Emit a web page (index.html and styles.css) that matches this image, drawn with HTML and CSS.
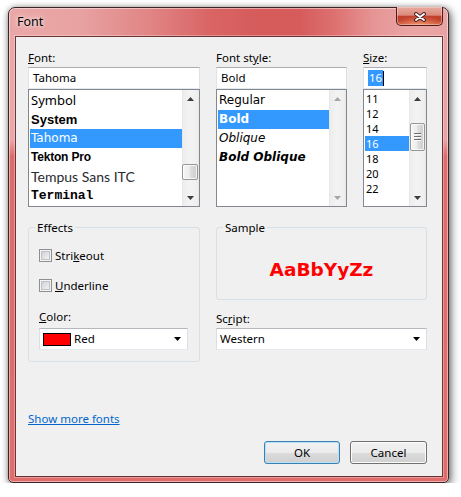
FILE: index.html
```html
<!DOCTYPE html>
<html>
<head>
<meta charset="utf-8">
<title>Font</title>
<link rel="stylesheet" href="styles.css">
</head>
<body>
<div class="window">
  <div class="titlebar">
    <span class="title">Font</span>
    <div class="close">
      <svg width="14" height="10" viewBox="0 0 14 10"><path d="M3 2 L11 8 M11 2 L3 8" stroke="#3b1c1c" stroke-width="3.8" stroke-linecap="round" fill="none"/><path d="M3 2 L11 8 M11 2 L3 8" stroke="#fff" stroke-width="2" stroke-linecap="round" fill="none"/></svg>
    </div>
  </div>
  <div class="client">
    <div class="pickers">
      <div class="picker">
        <div class="lbl"><u>F</u>ont:</div>
        <div class="input">Tahoma</div>
        <div class="list">
          <div class="items">
            <div class="item f-symbol">Symbol</div>
            <div class="item f-system">System</div>
            <div class="item f-tahoma selected">Tahoma</div>
            <div class="item f-tekton">Tekton Pro</div>
            <div class="item f-tempus">Tempus Sans ITC</div>
            <div class="item f-terminal">Terminal</div>
          </div>
          <div class="sbar">
            <div class="sbtn"><svg width="7" height="4" viewBox="0 0 7 4"><polygon points="0,4 3.5,0 7,4" fill="#3d3d3d"/></svg></div>
            <div class="track"><div class="thumb thumb-font"></div></div>
            <div class="sbtn"><svg width="7" height="4" viewBox="0 0 7 4"><polygon points="0,0 7,0 3.5,4" fill="#3d3d3d"/></svg></div>
          </div>
        </div>
      </div>
      <div class="picker">
        <div class="lbl">Font st<u>y</u>le:</div>
        <div class="input">Bold</div>
        <div class="list">
          <div class="items">
            <div class="item s-regular">Regular</div>
            <div class="item s-bold selected">Bold</div>
            <div class="item s-oblique">Oblique</div>
            <div class="item s-boldoblique">Bold Oblique</div>
          </div>
          <div class="sbar">
            <div class="sbtn"><svg width="7" height="4" viewBox="0 0 7 4"><polygon points="0,4 3.5,0 7,4" fill="#a6a6a6"/></svg></div>
            <div class="track"></div>
            <div class="sbtn"><svg width="7" height="4" viewBox="0 0 7 4"><polygon points="0,0 7,0 3.5,4" fill="#a6a6a6"/></svg></div>
          </div>
        </div>
      </div>
      <div class="picker">
        <div class="lbl"><u>S</u>ize:</div>
        <div class="input"><span class="sel-text">16</span><span class="caret"></span></div>
        <div class="list">
          <div class="items">
            <div class="item size">11</div>
            <div class="item size">12</div>
            <div class="item size">14</div>
            <div class="item size selected">16</div>
            <div class="item size">18</div>
            <div class="item size">20</div>
            <div class="item size">22</div>
          </div>
          <div class="sbar">
            <div class="sbtn"><svg width="7" height="4" viewBox="0 0 7 4"><polygon points="0,4 3.5,0 7,4" fill="#3d3d3d"/></svg></div>
            <div class="track"><div class="thumb thumb-size"><div class="grip"></div></div></div>
            <div class="sbtn"><svg width="7" height="4" viewBox="0 0 7 4"><polygon points="0,0 7,0 3.5,4" fill="#3d3d3d"/></svg></div>
          </div>
        </div>
      </div>
    </div>

    <div class="options">
      <fieldset class="group effects">
        <legend>Effects</legend>
        <div class="group-body">
          <div class="check-row first"><span class="check"></span><span>Stri<u>k</u>eout</span></div>
          <div class="check-row second"><span class="check"></span><span><u>U</u>nderline</span></div>
          <div class="lbl color-lbl"><u>C</u>olor:</div>
          <div class="combo color-combo">
            <span class="swatch"></span><span class="combo-text">Red</span>
            <svg class="arrow" width="7" height="4" viewBox="0 0 7 4"><polygon points="0,0 7,0 3.5,4" fill="#000"/></svg>
          </div>
        </div>
      </fieldset>
      <div class="right-col">
        <fieldset class="group sample">
          <legend>Sample</legend>
          <div class="sample-text">AaBbYyZz</div>
        </fieldset>
        <div class="lbl script-lbl">Sc<u>r</u>ipt:</div>
        <div class="combo script-combo">
          <span class="combo-text">Western</span>
          <svg class="arrow" width="7" height="4" viewBox="0 0 7 4"><polygon points="0,0 7,0 3.5,4" fill="#000"/></svg>
        </div>
      </div>
    </div>

    <a class="more" href="#">Show more fonts</a>

    <div class="buttons">
      <button class="btn default">OK</button>
      <button class="btn">Cancel</button>
    </div>
  </div>
</div>
</body>
</html>
```

FILE: styles.css
```css
html, body {
  margin: 0;
  padding: 0;
  background: #ffffff;
}

body {
  font-family: "Segoe UI", "Noto Sans", sans-serif;
  font-size: 11.5px;
  color: #000;
  padding: 7px 0 0 8px;
}

.window {
  box-sizing: border-box;
  width: 441px;
  height: 476px;
  border: 1px solid #3a2424;
  border-radius: 7px 7px 5px 5px;
  padding: 0 5px 5px 6px;
  display: flex;
  flex-direction: column;
  background:
    linear-gradient(to bottom, rgba(224,106,106,0) 0, rgba(224,106,106,0) 132px, #df6a6a 148px, #e06c6c 100%),
    linear-gradient(to right, #eaa7a7 0px, #e8a2a2 70px, #e18585 140px, #d96565 200px, #d65b5b 250px, #d65b5b 290px, #dd7070 325px, #e69595 365px, #eaa4a4 400px, #e9a3a3 441px);
  box-shadow: 2px 3px 10px rgba(0,0,0,0.55), 0 0 5px rgba(0,0,0,0.25), inset 0 0 0 1px rgba(255,255,255,0.45);
}

.titlebar {
  height: 28px;
  display: flex;
  justify-content: space-between;
  align-items: flex-start;
}

.title {
  margin: 6px 0 0 2px;
  font-size: 12.5px;
  line-height: 16px;
  color: #000;
  text-shadow: 0 0 6px rgba(255,255,255,0.9), 0 0 3px rgba(255,255,255,0.7);
}

.close {
  width: 47px;
  height: 19px;
  margin-top: -1px;
  box-sizing: border-box;
  border: 1px solid #4a1e1e;
  border-top: none;
  border-radius: 0 0 5px 5px;
  background:
    radial-gradient(ellipse 60% 50% at 50% 100%, rgba(255,170,120,0.7), rgba(255,170,120,0) 100%),
    linear-gradient(to bottom, #e9aba0 0%, #dc8a7c 45%, #c2412e 52%, #c0402c 75%, #cf5a40 100%);
  box-shadow: inset 0 0 0 1px rgba(255,220,210,0.45);
  display: flex;
  align-items: center;
  justify-content: center;
}

.close svg {
  display: block;
  margin-top: 1px;
}

.client {
  flex: 1;
  border: 1px solid #6a3434;
  background: #f0f0f0;
  padding: 13px 15px 12px 12px;
  display: flex;
  flex-direction: column;
  box-shadow: 0 0 0 1px rgba(255,255,255,0.3);
}

.lbl {
  line-height: 16px;
  height: 16px;
  margin-bottom: 1px;
  white-space: nowrap;
}

.pickers {
  display: grid;
  grid-template-columns: 172px 131px 64px;
  column-gap: 16px;
}

.picker {
  display: flex;
  flex-direction: column;
}

.input {
  box-sizing: border-box;
  height: 22px;
  border: 1px solid;
  border-color: #abadb3 #dbdfe6 #e3e9ef #e2e3ea;
  background: #fff;
  padding-left: 4px;
  line-height: 20px;
  white-space: nowrap;
  display: flex;
  align-items: center;
}

.sel-text {
  background: #3399ff;
  color: #fff;
  display: inline-block;
  height: 16px;
  line-height: 16px;
  padding: 0 1px;
}

.caret {
  display: inline-block;
  width: 1px;
  height: 15px;
  background: #000;
}

.list {
  box-sizing: border-box;
  height: 118px;
  border: 1px solid #828790;
  background: #fff;
  display: flex;
  overflow: hidden;
}

.items {
  flex: 1;
  min-width: 0;
  padding: 1px 0 0 1px;
  overflow: hidden;
}

.item {
  height: 19px;
  line-height: 19px;
  padding-left: 1px;
  white-space: nowrap;
  overflow: hidden;
}

.item.selected {
  background: #3399ff;
  color: #fff;
}

.f-symbol { font-family: "Segoe UI", "Noto Sans", sans-serif; font-size: 13px; }
.f-system { font-family: "Liberation Sans", sans-serif; font-weight: bold; font-size: 13px; }
.f-tahoma { font-family: "DejaVu Sans", sans-serif; font-size: 12px; }
.f-tekton { font-family: "Liberation Sans", sans-serif; font-weight: bold; font-size: 12px; letter-spacing: -0.2px; }
.f-tempus { font-family: "Lato", sans-serif; font-size: 14px; color: #2a2a30; }
.f-terminal { font-family: "Liberation Mono", monospace; font-weight: bold; font-size: 13px; }

.s-regular { font-family: "DejaVu Sans", sans-serif; font-size: 12px; }
.s-bold { font-family: "DejaVu Sans", sans-serif; font-size: 12px; font-weight: bold; }
.s-oblique { font-family: "DejaVu Sans", sans-serif; font-size: 12px; font-style: oblique; }
.s-boldoblique { font-family: "DejaVu Sans", sans-serif; font-size: 12px; font-weight: bold; font-style: oblique; }

.item.size {
  height: 15px;
  line-height: 15px;
  font-size: 11px;
}

.sbar {
  width: 17px;
  flex: none;
  display: flex;
  flex-direction: column;
  background: linear-gradient(to right, #e2e2e2 0, #ededed 1px, #f3f3f3 8px, #efefef 15px, #e6e6e6 17px);
}

.sbtn {
  height: 17px;
  flex: none;
  display: flex;
  align-items: center;
  justify-content: center;
}

.sbtn svg {
  display: block;
}

.track {
  flex: 1;
  display: flex;
  flex-direction: column;
}

.thumb {
  box-sizing: border-box;
  margin-right: 1px;
  border: 1px solid #979797;
  border-radius: 2px;
  background: linear-gradient(to right, #f6f6f6 0%, #ececec 45%, #dcdcdc 55%, #cdcdcd 100%);
  box-shadow: inset 0 0 0 1px rgba(255,255,255,0.75);
  display: flex;
  align-items: center;
  justify-content: center;
}

.thumb-font {
  margin-top: 57px;
  height: 16px;
}

.thumb-size {
  margin-top: 16px;
  height: 28px;
  margin-left: 1px;
}

.grip {
  width: 7px;
  height: 8px;
  background: repeating-linear-gradient(to bottom, #6e6e6e 0, #6e6e6e 1px, #fafafa 1px, #fafafa 2px, transparent 2px, transparent 3px);
}

.options {
  margin-top: 13px;
  display: grid;
  grid-template-columns: 172px 211px;
  column-gap: 16px;
  align-items: start;
}

.group {
  margin: 0;
  padding: 0;
  border: 1px solid #d5dfe5;
  border-radius: 3px;
  min-inline-size: 0;
  box-sizing: border-box;
}

.group legend {
  padding: 0 2px;
  margin-left: 6px;
  line-height: 15px;
  height: 15px;
}

.effects {
  height: 142px;
}

.group-body {
  padding: 13px 11px 11px 10px;
  display: flex;
  flex-direction: column;
}

.check-row {
  display: flex;
  align-items: center;
  gap: 3px;
  height: 15px;
  line-height: 15px;
}

.check-row.second {
  margin-top: 15px;
}

.check {
  width: 13px;
  height: 13px;
  box-sizing: border-box;
  border: 1px solid #8e8f8f;
  background:
    linear-gradient(135deg, #c9ccd1 0%, #e4e5e7 55%, #f6f6f6 100%) center / 9px 9px no-repeat,
    #f4f4f4;
  box-shadow: inset 0 0 0 1px #f4f4f4, inset 0 0 0 2px #bfc2c6;
}

.color-lbl {
  margin-top: 16px;
  height: 15px;
  line-height: 15px;
  margin-bottom: 4px;
}

.combo {
  box-sizing: border-box;
  height: 22px;
  border: 1px solid;
  border-color: #b5b8bd #dbdfe6 #e3e9ef #dbdfe6;
  background: #fff;
  display: flex;
  align-items: center;
  padding: 0 6px 0 3px;
}

.color-combo {
  width: 149px;
}

.swatch {
  width: 28px;
  height: 13px;
  box-sizing: border-box;
  border: 1px solid #000;
  background: #ff0000;
  margin-right: 3px;
}

.combo-text {
  flex: 1;
  line-height: 20px;
}

.arrow {
  display: block;
  flex: none;
}

.right-col {
  display: flex;
  flex-direction: column;
}

.sample {
  height: 80px;
  padding: 23px 0 17px 0;
}

.sample-text {
  text-align: center;
  font-family: "DejaVu Sans", sans-serif;
  font-weight: bold;
  font-size: 18.5px;
  line-height: 24px;
  height: 24px;
  color: #ff0000;
}

.script-lbl {
  margin-top: 11px;
  height: 15px;
  line-height: 15px;
  margin-bottom: 2px;
}

.more {
  margin-top: 49px;
  align-self: flex-start;
  line-height: 15px;
  height: 15px;
  color: #0066cc;
  text-decoration: underline;
}

.buttons {
  margin-top: 15px;
  display: flex;
  justify-content: flex-end;
  gap: 10px;
}

.btn {
  box-sizing: border-box;
  width: 76px;
  height: 23px;
  padding: 0;
  border: 1px solid #707070;
  border-radius: 3px;
  background: linear-gradient(to bottom, #f2f2f2 0%, #ebebeb 50%, #dddddd 51%, #cfcfcf 100%);
  box-shadow: inset 0 0 0 1px #fcfcfc;
  font-family: "Segoe UI", "Noto Sans", sans-serif;
  font-size: 11.5px;
  color: #000;
}

.btn + .btn {
  width: 77px;
}

.btn.default {
  border-color: #3c7fb1;
  box-shadow: inset 0 0 0 1px #b6e2f8;
}
```
